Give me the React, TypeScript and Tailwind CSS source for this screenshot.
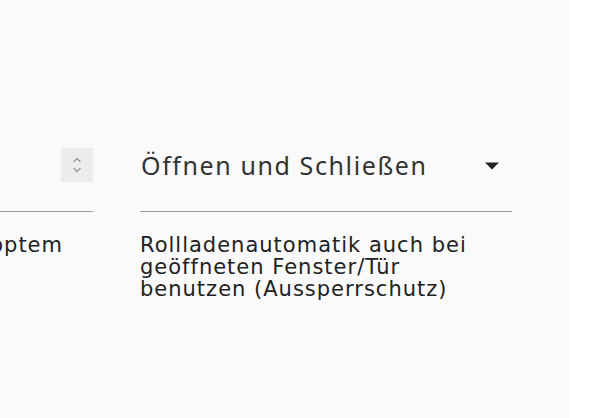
import React from 'react';

const titleFont = { fontFamily: '"Noto Sans", "Open Sans", sans-serif' };
const bodyFont = { fontFamily: '"DejaVu Sans", Verdana, sans-serif' };

const Spinner: React.FC = () => (
  <div className="flex h-[34px] w-[32px] items-center justify-center bg-[#ececec]">
    <svg width="12" height="22" viewBox="0 0 12 22" fill="none">
      <path d="M2.5 8L6 4.5L9.5 8" stroke="#9a9a9a" strokeWidth="1.3" />
      <path d="M2.5 14L6 17.5L9.5 14" stroke="#9a9a9a" strokeWidth="1.3" />
    </svg>
  </div>
);

const App: React.FC = () => {
  return (
    <div className="flex h-[418px] w-[596px] bg-white">
      <div className="flex h-full w-[569px] bg-[#fafafa] pt-[148px]">
        {/* left column, clipped at the page edge */}
        <div className="w-[93px] overflow-hidden">
          <div className="flex h-[64px] items-start justify-end border-b border-[#9e9e9e]">
            <Spinner />
          </div>
          <div className="mt-[22px] flex justify-end pr-[30px]">
            <p className="whitespace-nowrap text-[21px] tracking-[1px] leading-[22px] text-[#222]" style={bodyFont}>
              Kontaktoptem
            </p>
          </div>
        </div>

        {/* right column */}
        <div className="ml-[47px] w-[372px]">
          <div className="flex h-[64px] items-start justify-between border-b border-[#9e9e9e] pl-[1px] pr-[12px]">
            <span className="mt-[1px] text-[25px] tracking-[1.6px] leading-[32px] text-[#333]" style={titleFont}>
              Öffnen und Schließen
            </span>
            <svg className="mt-[14px]" width="16" height="8" viewBox="0 0 16 8">
              <path d="M1 0.5H15L8 7.5Z" fill="#222" />
            </svg>
          </div>
          <p className="mt-[22px] w-[360px] text-[21px] tracking-[1px] leading-[22px] text-[#222]" style={bodyFont}>
            Rollladenautomatik auch bei geöffneten Fenster/Tür benutzen (Aussperrschutz)
          </p>
        </div>
      </div>
    </div>
  );
};

export default App;
